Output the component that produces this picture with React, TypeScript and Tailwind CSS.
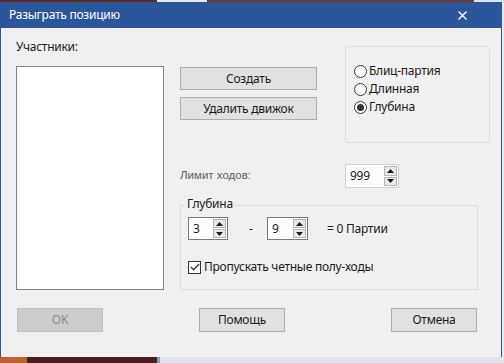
import type { ReactNode } from "react";

const font = "font-['Noto_Sans','Open_Sans','Liberation_Sans',sans-serif] tracking-[-0.25px]";

// маленький треугольник для кнопок счётчика
const Arrow = ({ up }: { up?: boolean }) => (
	<svg width="7" height="4" viewBox="0 0 7 4" className="block">
		<path d={up ? "M0 4 L3.5 0 L7 4 Z" : "M0 0 L3.5 4 L7 0 Z"} fill="#1a1a1a" />
	</svg>
);

const SpinBox = ({ value, width, light }: { value: string; width: string; light?: boolean }) => (
	<div
		className={`flex h-[23px] bg-white border ${light ? "border-[#cfcfcf]" : "border-[#7a7a7a]"} ${width}`}
	>
		<div className="flex-1 pl-[4px] text-[12px] leading-[21px] text-[#1a1a1a]">{value}</div>
		<div className="w-[15px] flex flex-col gap-[1px] p-[1px]">
			<div className="flex-1 flex items-center justify-center border border-[#b5b5b5] bg-[#e9e9e9]">
				<Arrow up />
			</div>
			<div className="flex-1 flex items-center justify-center border border-[#b5b5b5] bg-[#e9e9e9]">
				<Arrow />
			</div>
		</div>
	</div>
);

const Button = ({ children, className = "", disabled }: { children: ReactNode; className?: string; disabled?: boolean }) => (
	<div
		className={`flex items-center justify-center border text-[12px] ${
			disabled
				? "bg-[#cccccc] border-[#bfbfbf] text-[#8d8d8d]"
				: "bg-[#e1e1e1] border-[#adadad] text-[#1a1a1a]"
		} ${className}`}
	>
		{children}
	</div>
);

const Radio = ({ label, checked }: { label: string; checked?: boolean }) => (
	<div className="flex items-center h-[18px] gap-[2px]">
		<div className="w-[13px] h-[13px] rounded-full border border-[#333] bg-white flex items-center justify-center">
			{checked && <div className="w-[7px] h-[7px] rounded-full bg-[#333]" />}
		</div>
		<span className="text-[12px] text-[#1a1a1a] leading-[16px]">{label}</span>
	</div>
);

export default function App() {
	return (
		<div className={`w-[504px] h-[363px] overflow-hidden flex flex-col bg-[#dfe6ee] ${font}`}>
			{/* край рабочего стола сверху */}
			<div className="h-[2px] flex shrink-0">
				<div className="w-[157px] bg-[#5b2a26]" />
				<div className="w-[50px] bg-[#e8e8e8]" />
				<div className="flex-1 bg-[#6a3a33]" />
				<div className="w-[30px] bg-[#dde3ea]" />
			</div>

			<div className="flex h-[355px] shrink-0">
				<div className="w-[502px] flex flex-col border-x border-[#2b579a]">
					{/* заголовок окна */}
					<div className="h-[26px] shrink-0 bg-[#2b579a] flex items-center justify-between pl-[8px] pr-[34px]">
						<span className="text-[12px] text-white leading-[16px]">Разыграть позицию</span>
						<svg width="9" height="9" viewBox="0 0 9 9">
							<path d="M0.5 0.5 L8.5 8.5 M8.5 0.5 L0.5 8.5" stroke="#fff" strokeWidth="1.4" />
						</svg>
					</div>

					<div className="flex-1 bg-[#f0f0f0] pl-[15px] pt-[11px] flex flex-col">
						<div className="flex">
							{/* участники */}
							<div className="w-[148px] flex flex-col">
								<span className="h-[16px] text-[12px] leading-[16px] text-[#1a1a1a]">Участники:</span>
								<div className="mt-[11px] h-[224px] bg-white border border-[#828282]" />
							</div>

							<div className="ml-[16px] pt-[7px] flex flex-col">
								<div className="flex">
									<div className="w-[137px] pt-[21px] flex flex-col gap-[7px]">
										<Button className="h-[23px]">Создать</Button>
										<Button className="h-[23px]">Удалить движок</Button>
									</div>
									<div className="ml-[28px] w-[145px] h-[97px] rounded-[3px] border border-[#dcdcdc] pl-[8px] pt-[15px] flex flex-col">
										<Radio label="Блиц-партия" />
										<Radio label="Длинная" />
										<Radio label="Глубина" checked />
									</div>
								</div>

								<div className="mt-[21px] flex items-center h-[24px]">
									<span className="w-[165px] font-['Liberation_Sans',sans-serif] tracking-normal text-[11.5px] text-[#5f5f5f]">
										Лимит ходов:
									</span>
									<SpinBox value="999" width="w-[54px] h-[24px]" light />
								</div>

								{/* группа глубины */}
								<div className="mt-[17px] relative w-[298px] h-[85px] border border-[#dcdcdc] pl-[7px] pt-[11px]">
									<span className="absolute left-[5px] top-[-10px] px-[1px] bg-[#f0f0f0] text-[12px] leading-[16px] text-[#1a1a1a]">
										Глубина
									</span>
									<div className="flex items-center">
										<SpinBox value="3" width="w-[40px]" />
										<span className="ml-[21px] w-[18px] text-[12px] text-[#1a1a1a]">-</span>
										<SpinBox value="9" width="w-[41px]" />
										<span className="ml-[19px] text-[12px] text-[#1a1a1a]">= 0 Партии</span>
									</div>
									<div className="mt-[20px] flex items-center gap-[3px] h-[14px]">
										<div className="w-[13px] h-[13px] border border-[#333] bg-white flex items-center justify-center">
											<svg width="10" height="8" viewBox="0 0 10 8">
												<path d="M0.8 4 L3.6 6.8 L9.2 1" fill="none" stroke="#333" strokeWidth="1.3" />
											</svg>
										</div>
										<span className="text-[12px] leading-[16px] text-[#1a1a1a]">Пропускать четные полу-ходы</span>
									</div>
								</div>
							</div>
						</div>

						{/* нижние кнопки */}
						<div className="mt-[18px] flex">
							<Button disabled className="ml-[1px] w-[86px] h-[24px]">OK</Button>
							<Button className="ml-[96px] w-[86px] h-[24px]">Помощь</Button>
							<Button className="ml-[106px] w-[86px] h-[24px]">Отмена</Button>
						</div>
					</div>
				</div>
				<div className="flex-1 bg-[#e6ebf1]" />
			</div>

			<div className="h-[6px] flex shrink-0">
				<div className="w-[27px] bg-[#c0612e]" />
				<div className="w-[130px] bg-[#4c1c1c]" />
				<div className="w-[3px] bg-[#8aa0bd]" />
				<div className="flex-1 bg-[#dfe5ec]" />
			</div>
		</div>
	);
}
